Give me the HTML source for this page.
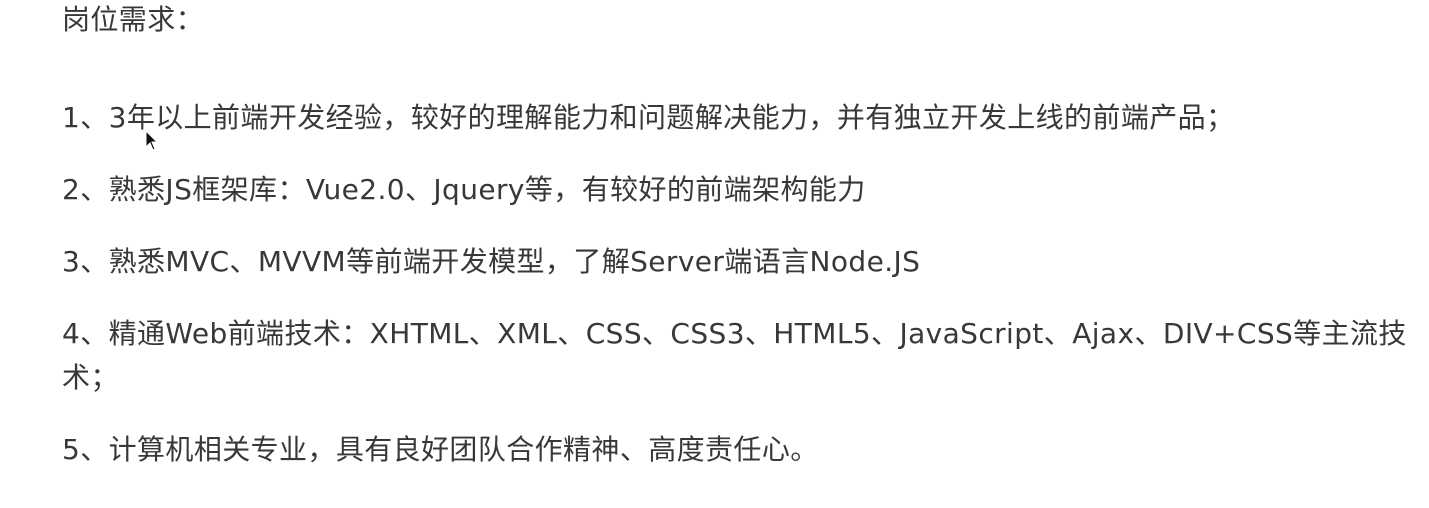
<!DOCTYPE html>
<html><head><meta charset="utf-8"><style>
body{margin:0;background:#fff;width:1429px;height:508px;overflow:hidden;}
.w{position:absolute;left:62px;top:0;width:1380px;font-family:"DejaVu Sans","Noto Sans CJK SC",sans-serif;font-size:28px;color:#383838;line-height:44px;letter-spacing:0.4px;}
p{margin:0;position:absolute;left:0;white-space:nowrap;}
</style></head><body><div class="w">
<p style="top:-2px">岗位需求：</p>
<p style="top:96px">1、3年以上前端开发经验，较好的理解能力和问题解决能力，并有独立开发上线的前端产品；</p>
<p style="top:168px">2、熟悉JS框架库：Vue2.0、Jquery等，有较好的前端架构能力</p>
<p style="top:240px">3、熟悉MVC、MVVM等前端开发模型，了解Server端语言Node.JS</p>
<p style="top:312px">4、精通Web前端技术：XHTML、XML、CSS、CSS3、HTML5、JavaScript、Ajax、DIV+CSS等主流技<br>术；</p>
<p style="top:428px">5、计算机相关专业，具有良好团队合作精神、高度责任心。</p>
</div>
<svg style="position:absolute;left:145px;top:130px" width="14" height="22" viewBox="0 0 14 22"><path d="M1 1 L1 17 L5 13 L8 20 L10 19 L7 12 L12 12 Z" fill="#111" stroke="#fff" stroke-width="1"/></svg>
</body></html>
